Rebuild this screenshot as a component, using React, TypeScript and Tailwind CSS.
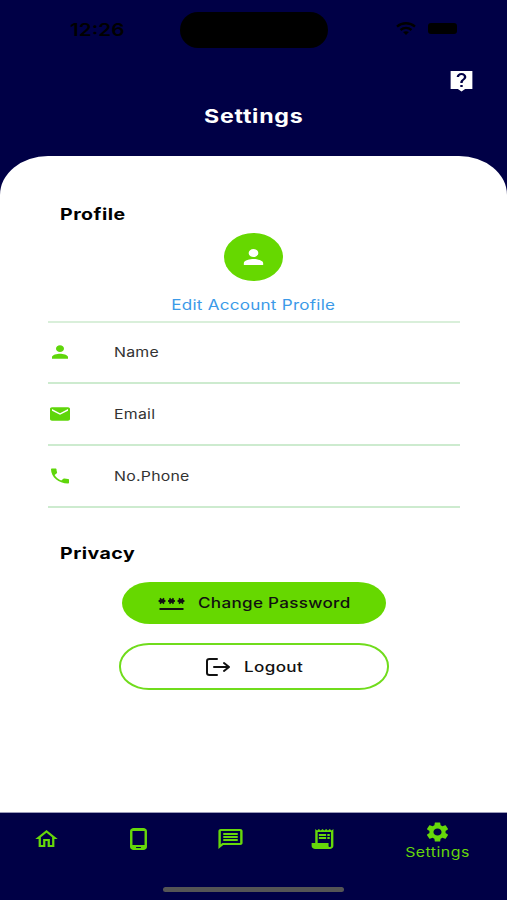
import { useState } from "react";
import type { ReactNode } from "react";
import type { IconType } from "react-icons";
import {
  MdEmail,
  MdOutlineHome,
  MdOutlineMessage,
  MdOutlinePhoneAndroid,
  MdPerson,
  MdPhone,
  MdReceiptLong,
  MdSettings,
} from "react-icons/md";

type TabId = "home" | "device" | "messages" | "receipts" | "settings";

const fields: { label: string; icon: IconType }[] = [
  { label: "Name", icon: MdPerson },
  { label: "Email", icon: MdEmail },
  { label: "No.Phone", icon: MdPhone },
];

const tabs: { id: TabId; label: string; icon: IconType }[] = [
  { id: "home", label: "Home", icon: MdOutlineHome },
  { id: "device", label: "Device", icon: MdOutlinePhoneAndroid },
  { id: "messages", label: "Messages", icon: MdOutlineMessage },
  { id: "receipts", label: "Receipts", icon: MdReceiptLong },
  { id: "settings", label: "Settings", icon: MdSettings },
];

// Wide lettering used all over the app
function Wide({ children, className = "" }: { children: ReactNode; className?: string }) {
  return <span className={`inline-block scale-x-[1.22] whitespace-nowrap ${className}`}>{children}</span>;
}

function StatusBar() {
  return (
    <div className="flex h-[59px] items-start text-black">
      <div className="w-[180px] pt-[18px] pl-[70px] text-[17px] leading-6 font-semibold">
        <Wide className="origin-left">12:26</Wide>
      </div>
      <div className="mt-3 h-9 w-[148px] rounded-full bg-black" />
      <div className="flex items-center pt-[22px] pl-[68px]">
        <svg className="h-[13px] w-5" viewBox="0 0 20 13" fill="none" stroke="currentColor" strokeWidth="2.400">
          <path d="M1 4.600C6 .2 14 .2 19 4.600" />
          <path d="M4.500 8C7.700 5.400 12.300 5.400 15.500 8" />
          <path d="M7 10q3-1.600 6 0L10 13z" fill="currentColor" stroke="none" />
        </svg>
        <div className="ml-3 h-[11px] w-[29px] rounded-[3px] bg-black" />
      </div>
    </div>
  );
}

function HelpIcon() {
  return (
    <svg className="h-6 w-[29px]" viewBox="0 0 24 24" preserveAspectRatio="none" fill="white">
      <path d="M21 2H3v18h6l3 2.500 3-2.500h6V2zm-8 16h-2v-2h2v2zm2.070-7.750-.9.920C13.450 11.900 13 12.500 13 14h-2v-.5c0-1.100.45-2.100 1.170-2.830l1.240-1.260c.37-.36.59-.86.59-1.410 0-1.100-.9-2-2-2s-2 .9-2 2H8c0-2.210 1.790-4 4-4s4 1.790 4 4c0 .88-.36 1.680-.93 2.250z" />
    </svg>
  );
}

function PasswordIcon() {
  return (
    <svg className="h-6 w-[29px]" viewBox="0 0 29 24" fill="none" stroke="currentColor">
      {[5, 14.5, 24].map((x) => (
        <path
          key={x}
          d={`M${x - 3.4} 10h6.800M${x - 2} 7.400l4 5.200M${x + 2} 7.400l-4 5.200`}
          strokeWidth="1.800"
        />
      ))}
      <path d="M2.500 18h24" strokeWidth="2" />
    </svg>
  );
}

function LogoutIcon() {
  return (
    <svg
      className="h-[18px] w-6"
      viewBox="0 0 24 18"
      fill="none"
      stroke="currentColor"
      strokeWidth="2"
      strokeLinecap="round"
      strokeLinejoin="round"
    >
      <path d="M11 1H3.500Q1 1 1 3v12q0 2 2.500 2H11" />
      <path d="M8 9h14.500M18 5l5 4-5 4" />
    </svg>
  );
}

export default function App() {
  const [active, setActive] = useState<TabId>("settings");

  return (
    <div className="flex h-[900px] w-[507px] flex-col overflow-hidden bg-[#000046] font-['Inter',sans-serif]">
      <header className="flex h-[156px] flex-col">
        <StatusBar />
        <div className="flex justify-end pt-[10px] pr-[31.5px]">
          <button aria-label="Help">
            <HelpIcon />
          </button>
        </div>
        <h1 className="mt-[9.5px] text-center text-[19px] leading-7 font-bold tracking-[0.6px] text-white">
          <Wide>Settings</Wide>
        </h1>
      </header>

      <main className="flex-1 bg-white pt-[46px] pr-[47px] pl-12 [border-radius:48px_48px_0_0/39px_39px_0_0]">
        <h2 className="pl-3 text-[16px] leading-6 font-bold tracking-[0.4px] text-black">
          <Wide className="origin-left">Profile</Wide>
        </h2>

        <div className="flex flex-col items-center pt-[7px] pr-px">
          <div className="flex h-12 w-[59px] items-center justify-center rounded-[50%] bg-[#66d800] text-white">
            <MdPerson className="h-6 w-[29px]" preserveAspectRatio="none" />
          </div>
          <button className="mt-3 text-[14px] leading-6 tracking-[0.2px] text-[#3b9ae8]">
            <Wide>Edit Account Profile</Wide>
          </button>
        </div>

        <ul className="mt-[3.5px] border-t-2 border-[#d9efda]">
          {fields.map(({ label, icon: Icon }) => (
            <li key={label} className="flex h-[61.7px] items-center border-b-2 border-[#cdebcf]">
              <Icon className="h-5 w-6 text-[#5fd60a]" preserveAspectRatio="none" />
              <span className="ml-[42px] text-[13px] leading-5 tracking-[0.2px] text-[#333]">
                <Wide className="origin-left">{label}</Wide>
              </span>
            </li>
          ))}
        </ul>

        <h2 className="mt-[33.5px] pl-3 text-[16px] leading-6 font-bold tracking-[0.4px] text-black">
          <Wide className="origin-left">Privacy</Wide>
        </h2>

        <div className="flex flex-col items-center pt-[17px]">
          <button className="flex h-[42px] w-[264px] items-center bg-[#66d800] pl-[35px] text-[#111] [border-radius:28px/21px]">
            <PasswordIcon />
            <span className="-mt-0.5 ml-[11.5px] text-[14px] font-medium tracking-[0.25px]">
              <Wide className="origin-left">Change Password</Wide>
            </span>
          </button>
          <button className="mt-[19px] flex h-[47px] w-[270px] items-center border-2 border-[#70dc1c] bg-white pl-[85px] text-[#111] [border-radius:30px/23px]">
            <LogoutIcon />
            <span className="-mt-px ml-[14px] text-[14px] font-medium tracking-[0.3px]">
              <Wide className="origin-left">Logout</Wide>
            </span>
          </button>
        </div>
      </main>

      <footer className="flex h-[88px] flex-col items-center border-t border-[#9c9cba]">
        <nav className="flex h-[74px] w-full text-[#66d80a]">
          {tabs.map(({ id, label, icon: Icon }) => (
            <button
              key={id}
              onClick={() => setActive(id)}
              aria-label={label}
              className={`flex flex-col items-center ${active === id ? "grow-[1.5] basis-0 pt-[7px]" : "grow basis-0 pt-[14px]"}`}
            >
              <Icon
                className={id === "home" || id === "settings" ? "h-6 w-[27px]" : "h-6 w-[29px]"}
                preserveAspectRatio="none"
              />
              {active === id && (
                <span className="text-[13px] leading-4 tracking-[0.4px]">
                  <Wide>{label}</Wide>
                </span>
              )}
            </button>
          ))}
        </nav>
        <div className="h-[5px] w-[181px] rounded-full bg-[#555]" />
      </footer>
    </div>
  );
}
